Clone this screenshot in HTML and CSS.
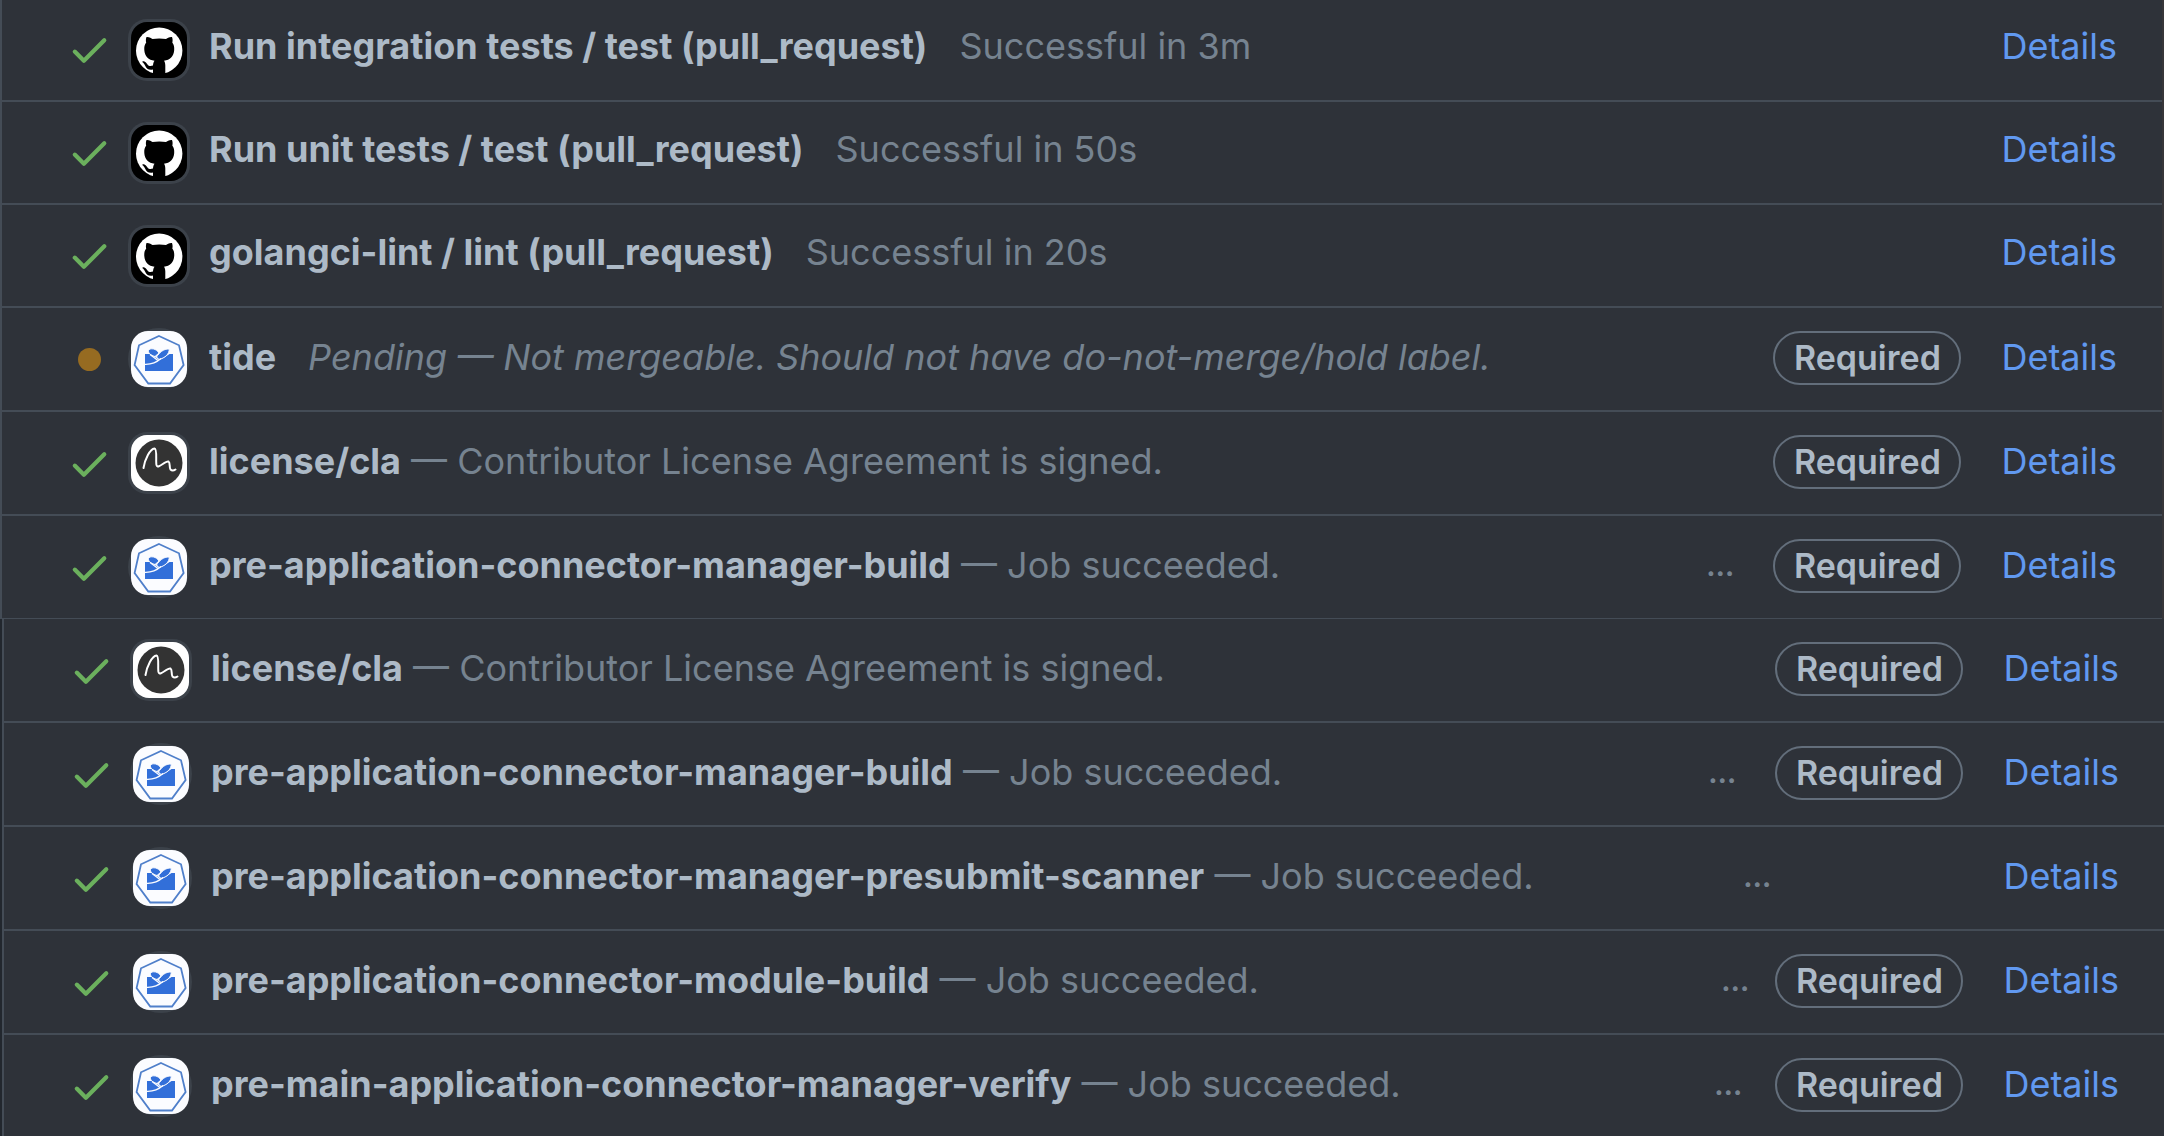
FILE: index.html
```
<!DOCTYPE html>
<html lang="en">
<head>
<meta charset="utf-8">
<title>Pull request checks</title>
<link rel="stylesheet" href="styles.css">
</head>
<body>
<svg class="sprite" aria-hidden="true">
  <symbol id="check" viewBox="0 0 16 16">
    <path fill="currentColor" d="M13.78 4.22a.75.75 0 0 1 0 1.06l-7.25 7.25a.75.75 0 0 1-1.06 0L2.22 9.28a.75.75 0 0 1 1.06-1.06L6 10.94l6.72-6.72a.75.75 0 0 1 1.06 0Z"/>
  </symbol>
  <symbol id="github" viewBox="-3 -3 62 62">
    <rect x="-3" y="-3" width="62" height="62" rx="19" fill="#3c424a"/>
    <rect width="56" height="56" rx="16" fill="#000"/>
    <circle cx="28.200" cy="28.700" r="23.200" fill="#fff"/>
    <path fill="#000" d="M15.500 15C18 14.700 20.500 16.300 21.500 17.100C25.500 16.200 31 16.200 35 17.100C36 16.300 38.500 14.700 41 15C41.800 17 41.700 19.200 41.300 20.600C43 22.800 43.400 25 43.200 28C42.800 34.500 39 38 33 38.700C34 40 34.300 41.500 34.300 43.500V53H22V47.500C17.500 48.300 15.500 46.500 14.300 44C13.500 42.200 12.500 40.800 11.500 40.200C11 39.500 11.800 39 12.800 39.200C14.500 39.500 15.500 41 16.500 42.500C17.800 44.300 19.800 44.300 22 43.500C22.100 41.500 22.500 40 23.500 38.700C17.500 38 13.700 34.500 13.300 28C13.100 25 13.500 22.800 15.200 20.600C14.800 19.200 14.700 17 15.500 15Z"/>
  </symbol>
  <symbol id="kyma" viewBox="-3 -3 62 62">
    <circle cx="28" cy="28" r="31" fill="#3c424a"/>
    <rect width="56" height="56" rx="17" fill="#fbfcff"/>
    <path fill="none" stroke="#4f7fca" stroke-width="1.8" d="M28 5 48 14.300 52.600 34 39 52.500H17.300L3.600 34 8 14.300Z"/>
    <path fill="#326fd9" d="M14 23H18.500L24.500 26.500L28 29L34 26L38.500 23H42V40H14Z"/>
    <path fill="#326fd9" stroke="#fbfcff" stroke-width="1" d="M17.500 19.500C19 16.500 25.500 17.500 28 22L24 25.500C20.500 24.500 17 22.500 17.500 19.500ZM38.200 18C38.500 23 34 27 28 28.500L25.500 26C28 22 32.500 17.500 38.200 18Z"/>
    <path fill="none" stroke="#fbfcff" stroke-width="1.300" d="M14 33.300C20 33.500 25.500 31.500 30 27.500M19 23.500L27 29.500"/>
  </symbol>
  <symbol id="cla" viewBox="-3 -3 62 62">
    <rect x="-3" y="-3" width="62" height="62" rx="19" fill="#3c424a"/>
    <rect width="56" height="56" rx="16" fill="#fff"/>
    <circle cx="28" cy="28" r="23.500" fill="#333"/>
    <path fill="none" stroke="#fff" stroke-width="2" stroke-linecap="round" stroke-linejoin="round" d="M12.500 33C14 24 19 14 23.500 13.500C26.500 14 24.500 26 25.500 30C27 35 34 25.500 37.500 26.500C39.500 28 38 32 39.500 34.500C41 36 43 35.500 44.500 34.500"/>
  </symbol>
</svg>

<main>
  <ul class="checks checks-framed">
    <li class="check">
      <svg class="status" role="img" aria-label="Passed"><use href="#check"/></svg>
      <svg class="avatar" aria-hidden="true"><use href="#github"/></svg>
      <p class="text"><strong class="name">Run integration tests / test (pull_request)</strong><span class="note note-apart">Successful in 3m</span></p>
      <a class="details" href="#">Details</a>
    </li>
    <li class="check">
      <svg class="status" role="img" aria-label="Passed"><use href="#check"/></svg>
      <svg class="avatar" aria-hidden="true"><use href="#github"/></svg>
      <p class="text"><strong class="name">Run unit tests / test (pull_request)</strong><span class="note note-apart">Successful in 50s</span></p>
      <a class="details" href="#">Details</a>
    </li>
    <li class="check">
      <svg class="status" role="img" aria-label="Passed"><use href="#check"/></svg>
      <svg class="avatar" aria-hidden="true"><use href="#github"/></svg>
      <p class="text"><strong class="name">golangci-lint / lint (pull_request)</strong><span class="note note-apart">Successful in 20s</span></p>
      <a class="details" href="#">Details</a>
    </li>
    <li class="check check-status">
      <span class="status pending" role="img" aria-label="Pending"></span>
      <svg class="avatar" aria-hidden="true"><use href="#kyma"/></svg>
      <p class="text"><strong class="name">tide</strong><em class="note note-apart">Pending — Not mergeable. Should not have do-not-merge/hold label.</em></p>
      <span class="label">Required</span>
      <a class="details" href="#">Details</a>
    </li>
    <li class="check check-status">
      <svg class="status" role="img" aria-label="Passed"><use href="#check"/></svg>
      <svg class="avatar" aria-hidden="true"><use href="#cla"/></svg>
      <p class="text"><strong class="name">license/cla</strong> <span class="note">— Contributor License Agreement is signed.</span></p>
      <span class="label">Required</span>
      <a class="details" href="#">Details</a>
    </li>
    <li class="check check-status">
      <svg class="status" role="img" aria-label="Passed"><use href="#check"/></svg>
      <svg class="avatar" aria-hidden="true"><use href="#kyma"/></svg>
      <p class="text"><strong class="name">pre-application-connector-manager-build</strong> <span class="note">— Job succeeded.</span></p>
      <span class="more more-wide">…</span>
      <span class="label">Required</span>
      <a class="details" href="#">Details</a>
    </li>
  </ul>

  <ul class="checks checks-inset">
    <li class="check check-status">
      <svg class="status" role="img" aria-label="Passed"><use href="#check"/></svg>
      <svg class="avatar" aria-hidden="true"><use href="#cla"/></svg>
      <p class="text"><strong class="name">license/cla</strong> <span class="note">— Contributor License Agreement is signed.</span></p>
      <span class="label">Required</span>
      <a class="details" href="#">Details</a>
    </li>
    <li class="check check-status">
      <svg class="status" role="img" aria-label="Passed"><use href="#check"/></svg>
      <svg class="avatar" aria-hidden="true"><use href="#kyma"/></svg>
      <p class="text"><strong class="name">pre-application-connector-manager-build</strong> <span class="note">— Job succeeded.</span></p>
      <span class="more more-wide">…</span>
      <span class="label">Required</span>
      <a class="details" href="#">Details</a>
    </li>
    <li class="check check-status">
      <svg class="status" role="img" aria-label="Passed"><use href="#check"/></svg>
      <svg class="avatar" aria-hidden="true"><use href="#kyma"/></svg>
      <p class="text"><strong class="name">pre-application-connector-manager-presubmit-scanner</strong> <span class="note">— Job succeeded.</span></p>
      <span class="more more-unlabelled">…</span>
      <a class="details" href="#">Details</a>
    </li>
    <li class="check check-status">
      <svg class="status" role="img" aria-label="Passed"><use href="#check"/></svg>
      <svg class="avatar" aria-hidden="true"><use href="#kyma"/></svg>
      <p class="text"><strong class="name">pre-application-connector-module-build</strong> <span class="note">— Job succeeded.</span></p>
      <span class="more">…</span>
      <span class="label">Required</span>
      <a class="details" href="#">Details</a>
    </li>
    <li class="check check-status">
      <svg class="status" role="img" aria-label="Passed"><use href="#check"/></svg>
      <svg class="avatar" aria-hidden="true"><use href="#kyma"/></svg>
      <p class="text"><strong class="name">pre-main-application-connector-manager-verify</strong> <span class="note">— Job succeeded.</span></p>
      <span class="more more-medium">…</span>
      <span class="label">Required</span>
      <a class="details" href="#">Details</a>
    </li>
  </ul>
</main>
</body>
</html>
```
FILE: styles.css
```
* {
  box-sizing: border-box;
}

html {
  overflow: hidden;
}

body {
  margin: 0;
  background: #2e3239;
  color: #adbac7;
  font-family: Inter, "Liberation Sans", sans-serif;
  font-size: 36px;
  line-height: 48px;
}

.sprite {
  display: none;
}

.checks {
  margin: 0;
  padding: 0;
  list-style: none;
  border-left: 2px solid #444c56;
}

.checks-framed {
  margin-top: -1px;
  border-right: 2px solid #373639;
}

.checks-inset {
  margin-left: 2px;
  box-shadow: -2px 0 #22272e;
}

.check {
  display: flex;
  align-items: center;
  min-height: 103px;
  padding: 0 45px 0 65px;
  border-bottom: 2px solid #444c56;
}

.check-status {
  min-height: 104px;
}

.checks-framed .check:last-child {
  min-height: 103px;
  border-bottom-width: 1px;
}

.checks-inset .check:last-child {
  min-height: 102px;
  border-bottom: 0;
}

.status {
  flex: none;
  width: 45px;
  height: 45px;
  color: #6bb05d;
}

.pending {
  width: 23px;
  height: 23px;
  margin: 0 11px;
  border-radius: 50%;
  background: #966b21;
}

.avatar {
  flex: none;
  width: 62px;
  height: 62px;
  margin: 0 19px 0 16px;
}

.text {
  flex: 1;
  margin: 0;
  white-space: nowrap;
}

.text,
.details {
  padding-bottom: 7px;
}

.check-status .text,
.check-status .details {
  padding-bottom: 4px;
}

.name {
  font-weight: 700;
}

.note {
  color: #768390;
}

.note-apart {
  margin-left: 32px;
}

.more {
  margin-right: 26px;
  padding-bottom: 2px;
  color: #768390;
  font-size: 28px;
  font-weight: 700;
}

.more-medium {
  margin-right: 33px;
}

.more-wide {
  margin-right: 39px;
}

.more-unlabelled {
  margin-right: 192px;
}

.label {
  width: 188px;
  height: 54px;
  margin-bottom: 3px;
  border: 2px solid #636e7b;
  border-radius: 27px;
  font-size: 34px;
  font-weight: 600;
  line-height: 50px;
  text-align: center;
}

.details {
  margin-left: 40px;
  color: #6199f0;
  text-decoration: none;
}
```
